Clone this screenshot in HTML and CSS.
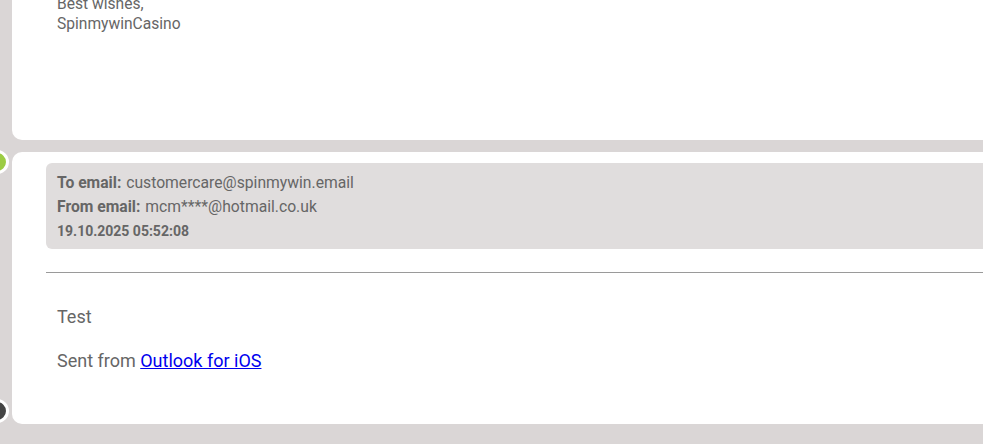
FILE: index.html
```html
<!DOCTYPE html>
<html>
<head>
<meta charset="utf-8">
<link rel="stylesheet" href="styles.css">
</head>
<body>
<div class="thread">
  <div class="card card-prev">
    <p class="sign">Best wishes,<br>SpinmywinCasino</p>
  </div>
  <div class="card card-current">
    <span class="dot dot-green"></span>
    <span class="dot dot-dark"></span>
    <div class="meta">
      <div class="meta-row"><span class="label">To email:</span> customercare@spinmywin.email</div>
      <div class="meta-row"><span class="label">From email:</span> mcm****@hotmail.co.uk</div>
      <div class="meta-row date">19.10.2025 05:52:08</div>
    </div>
    <hr class="sep">
    <div class="msg-body">
      <p>Test</p>
      <p>Sent from <a href="#">Outlook for iOS</a></p>
    </div>
  </div>
</div>
</body>
</html>
```
FILE: styles.css
```css
html, body {
  margin: 0;
  padding: 0;
  background: #dad6d6;
  overflow: hidden;
}
body {
  font-family: Roboto, "Liberation Sans", sans-serif;
  color: #666;
  width: 983px;
  height: 444px;
}
.thread {
  display: flex;
  flex-direction: column;
  gap: 12px;
  padding-left: 12px;
  margin-top: -60px;
  width: 1000px;
}
.card {
  position: relative;
  background: #fff;
  border-radius: 10px;
}
.card-prev {
  padding: 54px 0 106px 45px;
}
.sign {
  margin: 0;
  font-size: 15.6px;
  line-height: 20px;
}
.card-current {
  padding: 11px 0 51px 34px;
}
.meta {
  background: #e0dddd;
  border-radius: 6px;
  padding: 8px 11px 6px;
  font-size: 15.7px;
  line-height: 24px;
}
.label {
  font-weight: 700;
  margin-right: 1px;
}
.date {
  font-weight: 700;
  font-size: 14px;
}
.sep {
  margin: 23px 0 0 0;
  border: 0;
  border-top: 1px solid #9a9a9a;
  height: 0;
}
.msg-body {
  padding: 32px 0 0 11px;
  font-size: 18px;
  line-height: 24px;
}
.msg-body p {
  margin: 0 0 20px 0;
}
.msg-body p:last-child {
  margin-bottom: 0;
}
.msg-body a {
  color: #0000ee;
}
.dot {
  position: absolute;
  width: 18px;
  height: 18px;
  border-radius: 50%;
  border: 3px solid #fff;
  left: -27px;
}
.dot-green {
  background: #9ccc44;
  top: -2px;
}
.dot-dark {
  background: #444;
  bottom: 1px;
}
```
